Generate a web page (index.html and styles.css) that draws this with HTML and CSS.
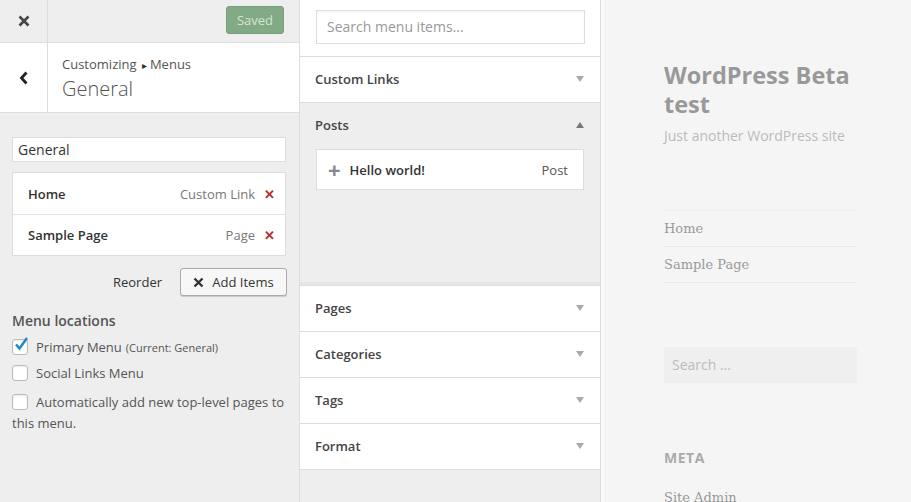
FILE: index.html
```html
<!DOCTYPE html>
<html lang="en">
<head>
    <meta charset="UTF-8">
    <title>Customizing Menus</title>
    <link rel="stylesheet" href="styles.css">
</head>
<body>
<div class="wrap">
    <!-- 왼쪽 패널 -->
    <aside class="side">
        <div class="topbar">
            <span class="close">
                <svg width="12" height="12" viewBox="0 0 12 12"><path d="M1.5 1.5L10.5 10.5M10.5 1.5L1.5 10.5" stroke="#444" stroke-width="2.6"/></svg>
            </span>
            <span class="saved">Saved</span>
        </div>
        <div class="sect">
            <span class="back">
                <svg width="10" height="14" viewBox="0 0 10 14"><path d="M7.5 1.5L2.5 7L7.5 12.5" fill="none" stroke="#222" stroke-width="2.8"/></svg>
            </span>
            <div class="sect-title">
                <p class="crumb">Customizing <span class="tri">&#9656;</span>Menus</p>
                <h2>General</h2>
            </div>
        </div>
        <div class="body">
            <div class="name-input">General</div>
            <ul class="items">
                <li><b>Home</b><span class="type">Custom Link</span><span class="del">&#10005;</span></li>
                <li><b>Sample Page</b><span class="type">Page</span><span class="del">&#10005;</span></li>
            </ul>
            <div class="actions">
                <span class="reorder">Reorder</span>
                <span class="add-btn">
                    <svg width="11" height="11" viewBox="0 0 11 11"><path d="M1.5 1.5L9.5 9.5M9.5 1.5L1.5 9.5" stroke="#333" stroke-width="2.4"/></svg>
                    Add Items
                </span>
            </div>
            <h3>Menu locations</h3>
            <label class="chk"><span class="box on"><svg width="16" height="16" viewBox="0 0 16 16"><path d="M3 7.5L6.5 11.5L14 1" fill="none" stroke="#1e8cbe" stroke-width="2.6"/></svg></span>Primary Menu <small>(Current: General)</small></label>
            <label class="chk"><span class="box"></span>Social Links Menu</label>
            <p class="auto"><span class="box"></span>Automatically add new top-level pages to this menu.</p>
        </div>
    </aside>

    <!-- 가운데 패널 -->
    <section class="avail">
        <div class="search"><div class="search-input">Search menu items...</div></div>
        <div class="acc"><span>Custom Links</span><i class="down"></i></div>
        <div class="acc open"><span>Posts</span><i class="up"></i></div>
        <div class="posts-body">
            <div class="post"><span class="plus">+</span><b>Hello world!</b><span class="ptype">Post</span></div>
        </div>
        <div class="acc"><span>Pages</span><i class="down"></i></div>
        <div class="acc"><span>Categories</span><i class="down"></i></div>
        <div class="acc"><span>Tags</span><i class="down"></i></div>
        <div class="acc"><span>Format</span><i class="down"></i></div>
    </section>

    <!-- 미리보기 -->
    <main class="preview">
        <h1>WordPress Beta test</h1>
        <p class="desc">Just another WordPress site</p>
        <ul class="nav">
            <li>Home</li>
            <li>Sample Page</li>
        </ul>
        <div class="psearch">Search &hellip;</div>
        <h4>Meta</h4>
        <p class="admin">Site Admin</p>
    </main>
</div>
</body>
</html>
```

FILE: styles.css
```css
*{margin:0; padding:0; box-sizing:border-box;}
body {font-family:"Open Sans", sans-serif; color:#444; overflow:hidden;}
ul {list-style:none;}

.wrap {display:grid; grid-template-columns:300px 301px 1fr; height:502px;}

/* 왼쪽 */
.side {background-color:#eee; border-right:1px solid #ddd;}
.topbar {height:43px; display:flex; align-items:flex-start; border-bottom:1px solid #ddd;}
.close {width:48px; height:42px; border-right:1px solid #ddd; display:flex; align-items:center; justify-content:center;}
.saved {margin:6px 15px 0 auto; width:58px; height:28px; border-radius:3px;
    background-color:#82aa84; border:1px solid #77a079; color:#d5e5d5;
    font-size:13px; line-height:26px; text-align:center;}
.sect {height:70px; background:#fff; border-bottom:1px solid #ddd; display:flex;}
.back {width:48px; border-right:1px solid #ddd; display:flex; align-items:center; justify-content:center;}
.sect-title {padding:12px 0 0 14px;}
.crumb {font-size:13px; color:#555; line-height:18px;}
.tri {font-size:10px; margin:0 3px 0 2px; color:#333;}
.sect-title h2 {font-size:20px; font-weight:300; color:#555; line-height:28px; margin-top:1px;}

.body {padding:24px 13px 0 12px;}
.name-input {height:25px; background:#fff; border:1px solid #ddd; font-size:14px; line-height:23px; padding-left:5px; color:#333;}
.items {margin-top:10px; background:#fff; border:1px solid #ddd;}
.items li {height:41px; display:flex; align-items:center; padding:0 10px 0 15px; font-size:13px;}
.items li + li {border-top:1px solid #e5e5e5;}
.items b {color:#333; font-weight:600;}
.type {margin-left:auto; color:#777;}
.del {color:#b32d2e; font-weight:bold; margin-left:9px; font-size:13px;}
.actions {display:flex; align-items:center; justify-content:flex-end; margin-top:12px; font-size:13px;}
.reorder {color:#333; margin-right:18px;}
.add-btn {width:107px; height:28px; border:1px solid #aaa; border-radius:3px; background:#f7f7f7;
    box-shadow:0 1px 0 #ccc; display:flex; align-items:center; justify-content:center; gap:8px; color:#333; margin-right:-1px;}
.body h3 {font-size:14px; font-weight:600; color:#555; margin-top:16px; line-height:18px;}
.chk {display:flex; align-items:center; font-size:13px; color:#555; margin-top:8px; height:18px;}
.chk small {font-size:11px; margin-left:4px;}
.box {display:inline-block; width:16px; height:16px; border:1px solid #bbb; border-radius:3px; background:#fff;
    box-shadow:inset 0 1px 2px rgba(0,0,0,.08); margin-right:8px; flex:none; position:relative; vertical-align:-3px;}
.box svg {position:absolute; left:0; top:-3px;}
.auto {font-size:13px; color:#555; line-height:21px; margin-top:10px;}

/* 가운데 */
.avail {background:#eee; border-right:1px solid #ddd;}
.search {background:#fff; height:57px; padding:10px 15px 0 16px; border-bottom:1px solid #ddd;}
.search-input {height:34px; border:1px solid #ddd; font-size:14px; color:#999; line-height:32px; padding-left:10px; box-shadow:inset 0 1px 2px rgba(0,0,0,.05);}
.acc {height:46px; background:#fff; border-bottom:1px solid #ddd; display:flex; align-items:center; padding:0 16px 2px 15px;
    font-size:13px; font-weight:600; color:#444;}
.acc.open {background:#eee; border-bottom:0;}
.acc i {margin-left:auto; width:0; height:0; border-left:4px solid transparent; border-right:4px solid transparent;}
.acc i.down {border-top:6px solid #aaa;}
.acc i.up {border-bottom:6px solid #777;}
.posts-body {height:137px; padding:0 16px 0 16px; border-bottom:1px solid #ddd; box-shadow:inset 0 -3px 0 #e6e6e6;}
.post {height:41px; background:#fff; border:1px solid #ddd; display:flex; align-items:center; padding:0 15px 0 11px; font-size:13px;}
.post .plus {font-size:22px; color:#888; font-weight:700; line-height:1; margin-right:9px; margin-top:-2px;}
.post b {color:#333; font-weight:600;}
.ptype {margin-left:auto; color:#555;}

/* 미리보기 */
.preview {background:#f5f5f5; border-left:3px solid #fafafa; padding:61px 0 0 60px;}
.preview h1 {font-size:23.5px; line-height:29px; font-weight:700; color:#999; width:200px;}
.desc {font-size:14px; color:#bbb; margin-top:7px;}
.nav {margin-top:65px; width:193px; border-top:1px solid #efefef;}
.nav li {font-family:"DejaVu Serif", serif; font-size:13px; color:#999; height:36px; line-height:36px; border-bottom:1px solid #eaeaea;}
.psearch {margin-top:64px; width:193px; height:36px; background:#efefef; color:#bbb; font-size:14px; line-height:36px; padding-left:8px;}
.preview h4 {margin-top:65px; font-size:14px; font-weight:700; color:#aaa; text-transform:uppercase; letter-spacing:.5px;}
.admin {font-family:"DejaVu Serif", serif; font-size:13px; color:#999; margin-top:23px;}
```
